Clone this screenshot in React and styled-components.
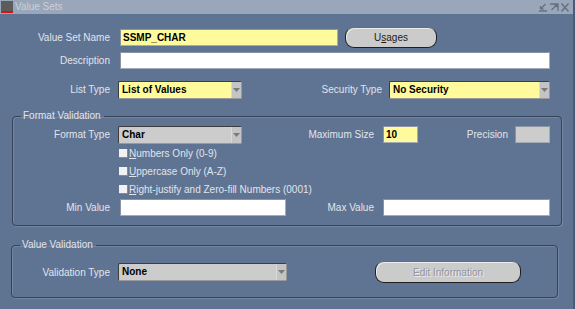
import React from 'react'
import styled, { createGlobalStyle } from 'styled-components'

const GlobalStyle = createGlobalStyle`
  html, body {
    margin: 0;
    padding: 0;
    background: #5f7393;
  }
  * {
    box-sizing: border-box;
  }
`

const Mnemonic = ({ text, at = 0 }) => (
  <>
    {text.slice(0, at)}
    <u>{text[at]}</u>
    {text.slice(at + 1)}
  </>
)

const CheckRow = ({ text, at }) => (
  <CheckLine>
    <CheckBox />
    <CheckText>
      <Mnemonic text={text} at={at} />
    </CheckText>
  </CheckLine>
)

const Select = ({ value, width, yellow }) => (
  <SelectBox $width={width} $yellow={yellow}>
    <SelectValue>{value}</SelectValue>
    <SelectArrow>
      <svg width='7' height='4' viewBox='0 0 7 4'>
        <path d='M0 0h7L3.5 4z' fill='#7a7a7a' />
      </svg>
    </SelectArrow>
  </SelectBox>
)

const App = () => {
  return (
    <Window>
      <GlobalStyle />
      <TitleBar>
        <AppIcon />
        <TitleText>Value Sets</TitleText>
        <Controls>
          <svg width='10' height='9' viewBox='0 0 10 9'>
            <path d='M1 8h8M2.5 6l5-5M2.5 6V3M2.5 6h3' stroke='#66727f' strokeWidth='1.3' fill='none' />
          </svg>
          <svg width='10' height='9' viewBox='0 0 10 9'>
            <path d='M1 1h8v7M8 1.5L2.5 7M8 1.5H5M8 1.5v3' stroke='#66727f' strokeWidth='1.3' fill='none' />
          </svg>
          <svg width='10' height='9' viewBox='0 0 10 9'>
            <path d='M1.5 0.5l7 8M8.5 0.5l-7 8' stroke='#66727f' strokeWidth='1.5' fill='none' />
          </svg>
        </Controls>
      </TitleBar>
      <Body>
        <Row $top={13} $height={21}>
          <Label $width={110}>Value Set Name</Label>
          <Field $width={218} $yellow $ml={10}>SSMP_CHAR</Field>
          <Button $width={92} $ml={7}>
            U<u>s</u>ages
          </Button>
        </Row>
        <Row $top={4} $height={16}>
          <Label $width={110}>Description</Label>
          <Field $width={430} $ml={10} />
        </Row>
        <Row $top={12} $height={19}>
          <Label $width={110}>List Type</Label>
          <Spacer $width={8} />
          <Select value='List of Values' width={124} yellow />
          <Label $width={140}>Security Type</Label>
          <Spacer $width={7} />
          <Select value='No Security' width={161} yellow />
        </Row>

        <Group $top={11} $left={12} $right={11}>
          <Legend>Format Validation</Legend>
          <Row $top={4} $height={17}>
            <Label $width={97}>Format Type</Label>
            <Spacer $width={8} />
            <Select value='Char' width={124} />
            <Label $width={132}>Maximum Size</Label>
            <Field $width={35} $yellow $ml={9}>10</Field>
            <Label $width={90}>Precision</Label>
            <Field $width={35} $grey $ml={7} />
          </Row>
          <Checks>
            <CheckRow text='Numbers Only (0-9)' at={0} />
            <CheckRow text='Uppercase Only (A-Z)' at={0} />
            <CheckRow text='Right-justify and Zero-fill Numbers (0001)' at={0} />
          </Checks>
          <Row $top={1} $height={17}>
            <Label $width={97}>Min Value</Label>
            <Field $width={166} $ml={10} />
            <Label $width={88}>Max Value</Label>
            <Field $width={167} $ml={9} />
          </Row>
        </Group>

        <Group $top={13} $left={11} $right={15} $bottom={14}>
          <Legend>Value Validation</Legend>
          <Row $top={10} $height={22}>
            <Label $width={98}>Validation Type</Label>
            <Spacer $width={8} />
            <Select value='None' width={169} />
            <Button $width={146} $ml={88} $height={22} disabled>
              Edit Information
            </Button>
          </Row>
        </Group>
      </Body>
    </Window>
  )
}

export default App

const Window = styled.div`
  width: 575px;
  height: 309px;
  background: #5f7393;
  border-right: 2px solid #4b5c76;
  font-family: 'Liberation Sans', Arial, sans-serif;
  overflow: hidden;
`
const TitleBar = styled.div`
  height: 14px;
  background: #9aa7bb;
  display: flex;
  align-items: center;
  padding-left: 1px;
`
const AppIcon = styled.div`
  width: 12px;
  height: 12px;
  background: #5c5c5c;
  border-bottom: 2px solid #e01010;
`
const TitleText = styled.span`
  margin-left: 2px;
  font-size: 10px;
  color: #c9d0da;
  line-height: 14px;
`
const Controls = styled.div`
  margin-left: auto;
  margin-right: 3px;
  display: flex;
  gap: 1px;
  align-items: center;
`
const Body = styled.div`
  display: flex;
  flex-direction: column;
`
const Row = styled.div`
  display: flex;
  align-items: center;
  margin-top: ${(p) => p.$top || 0}px;
  height: ${(p) => p.$height}px;
`
const Label = styled.span`
  width: ${(p) => p.$width}px;
  flex-shrink: 0;
  text-align: right;
  font-size: 10px;
  color: #e1e5eb;
  white-space: nowrap;
`
const Spacer = styled.span`
  width: ${(p) => p.$width}px;
  flex-shrink: 0;
`
const Field = styled.div`
  width: ${(p) => p.$width}px;
  height: 17px;
  margin-left: ${(p) => p.$ml || 0}px;
  flex-shrink: 0;
  background: ${(p) => (p.$yellow ? '#fffb9c' : p.$grey ? '#cccccc' : '#ffffff')};
  border: 1px solid #a3acb9;
  border-top-color: #8a94a3;
  border-left-color: #8a94a3;
  padding-left: 2px;
  font-size: 10px;
  font-weight: bold;
  line-height: 15px;
  color: #000;
`
const SelectBox = styled.div`
  width: ${(p) => p.$width}px;
  height: 18px;
  flex-shrink: 0;
  display: flex;
  background: ${(p) => (p.$yellow ? '#fffb9c' : '#cccccc')};
  border: 1px solid #3d3d3d;
  border-right-color: #9a9a9a;
  border-bottom-color: #9a9a9a;
  border-radius: 2px;
`
const SelectValue = styled.span`
  flex: 1;
  padding-left: 3px;
  font-size: 10px;
  font-weight: bold;
  line-height: 16px;
  color: #000;
`
const SelectArrow = styled.span`
  width: 10px;
  background: #c4c4c4;
  display: flex;
  align-items: center;
  justify-content: center;
  border-left: 1px solid #dadada;
`
const Button = styled.button`
  width: ${(p) => p.$width}px;
  height: ${(p) => p.$height || 21}px;
  margin-left: ${(p) => p.$ml || 0}px;
  flex-shrink: 0;
  background: #cbcbcb;
  border: 1px solid #1e1e1e;
  border-top-color: #6c6c6c;
  border-radius: 9px;
  box-shadow: inset 1px 1px 0 #ececec;
  font-family: 'Liberation Sans', Arial, sans-serif;
  font-size: 10px;
  color: #1c1c1c;
  padding: 0;
  &:disabled {
    color: #8e96a2;
    text-shadow: 1px 1px 0 #eeeeee;
  }
`
const Group = styled.fieldset`
  margin: ${(p) => p.$top}px ${(p) => p.$right}px 0 ${(p) => p.$left}px;
  padding: 0 0 ${(p) => p.$bottom || 9}px 0;
  min-inline-size: 0;
  border: 1px solid #34425a;
  border-radius: 4px;
  box-shadow: 1px 1px 0 #7586a3, inset 1px 1px 0 #7586a3;
`
const Legend = styled.legend`
  margin-left: 8px;
  padding: 0 3px 0 2px;
  font-size: 10px;
  line-height: 12px;
  color: #e1e5eb;
`
const Checks = styled.div`
  display: flex;
  flex-direction: column;
  margin-top: 1px;
  padding-left: 106px;
`
const CheckLine = styled.div`
  display: flex;
  align-items: center;
  height: 18px;
`
const CheckBox = styled.span`
  width: 9px;
  height: 9px;
  background: #f2f2f2;
  border-right: 1px solid #8a8a8a;
  border-bottom: 1px solid #8a8a8a;
`
const CheckText = styled.span`
  margin-left: 1px;
  font-size: 10px;
  color: #e1e5eb;
`
